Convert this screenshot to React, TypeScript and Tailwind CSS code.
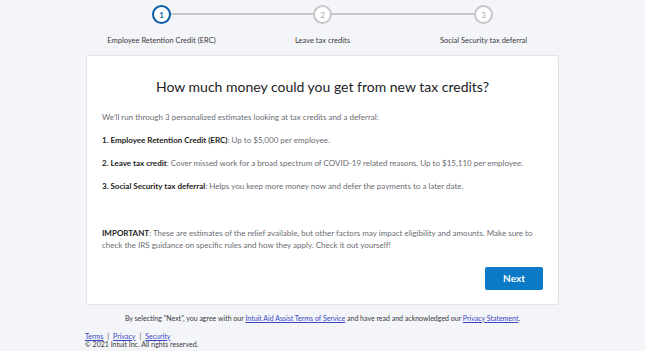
const Step = ({ n, label, active }: { n: number; label: string; active?: boolean }) => (
  <div className="flex flex-col items-center w-[161px]">
    <div
      className={
        active
          ? "w-[19px] h-[19px] rounded-full border-2 border-[#0a5da8] bg-white flex items-center justify-center text-[8px] font-bold text-[#0a5da8]"
          : "w-[19px] h-[19px] rounded-full border-2 border-[#c6c7cb] bg-white flex items-center justify-center text-[8px] text-[#a8a9ad]"
      }
    >
      {n}
    </div>
    <div className="mt-[13px] text-[7.5px] text-[#393a3d] leading-none">{label}</div>
  </div>
);

const App = () => {
  return (
    <div className="w-[645px] h-[351px] bg-[#f4f5f8] font-['Lato',sans-serif] text-[#393a3d] overflow-hidden">
      <section className="relative flex justify-center pt-[5px]">
        <div className="absolute top-[13px] left-[161px] w-[322px] h-[2px] bg-[#c6c7cb]" />
        <div className="relative flex">
          <Step n={1} label="Employee Retention Credit (ERC)" active />
          <Step n={2} label="Leave tax credits" />
          <Step n={3} label="Social Security tax deferral" />
        </div>
      </section>
      <section className="mx-auto mt-[10px] w-[473px] h-[250px] bg-white border border-[#e3e4e8] rounded-[2px] px-[15px] pt-[24px] flex flex-col">
        <h2 className="text-center text-[14px] text-[#212224] leading-none">
          How much money could you get from new tax credits?
        </h2>
        <div className="mt-[17px] text-[8px] text-[#6b6c72] leading-[12px] flex flex-col gap-[11px]">
          <p>We'll run through 3 personalized estimates looking at tax credits and a deferral:</p>
          <p>
            <b className="text-[#222] font-bold">1. Employee Retention Credit (ERC)</b>: Up to $5,000 per employee.
          </p>
          <p>
            <b className="text-[#222] font-bold">2. Leave tax credit</b>: Cover missed work for a broad spectrum of
            COVID-19 related reasons. Up to $15,110 per employee.
          </p>
          <p>
            <b className="text-[#222] font-bold">3. Social Security tax deferral</b>: Helps you keep more money now and
            defer the payments to a later date.
          </p>
          <p className="mt-[24px] pr-[10px]">
            <b className="text-[#222] font-bold">IMPORTANT</b>: These are estimates of the relief available, but other
            factors may impact eligibility and amounts. Make sure to check the IRS guidance on specific rules and how
            they apply. Check it out yourself!
          </p>
        </div>
        <div className="flex justify-end mt-[16px]">
          <button className="w-[58px] h-[23px] rounded-[2px] bg-[#0a7ac6] text-white text-[10px] font-bold">
            Next
          </button>
        </div>
      </section>
      <p className="mt-[9px] text-center text-[7px] leading-[9px] text-[#393a3d]">
        By selecting "Next", you agree with our{" "}
        <a className="text-[#3a46c4] underline">Intuit Aid Assist Terms of Service</a> and have read and acknowledged
        our <a className="text-[#3a46c4] underline">Privacy Statement</a>.
      </p>
      <div className="mt-[9px] pl-[85px] text-[7px] leading-[8.5px] text-[#393a3d]">
        <div className="flex gap-[4px]">
          <a className="text-[#3a46c4] underline">Terms</a>
          <span>|</span>
          <a className="text-[#3a46c4] underline">Privacy</a>
          <span>|</span>
          <a className="text-[#3a46c4] underline">Security</a>
        </div>
        <div>© 2021 Intuit Inc. All rights reserved.</div>
      </div>
    </div>
  );
};

export default App;
